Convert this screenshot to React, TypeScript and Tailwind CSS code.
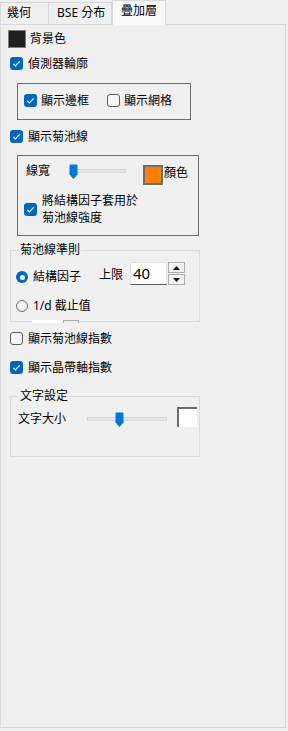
import React from "react";

function Check({ on }: { on: boolean }) {
  if (on) {
    return (
      <span className="w-[13px] h-[13px] shrink-0 rounded-[3px] bg-[#0067c0] flex items-center justify-center">
        <svg width="13" height="13" viewBox="0 0 13 13">
          <polyline points="3.3,6.8 5.4,8.9 9.7,4.4" fill="none" stroke="#ffffff" strokeWidth="1.1" />
        </svg>
      </span>
    );
  }
  return <span className="w-[13px] h-[13px] shrink-0 rounded-[3px] border border-[#5c5c5c] bg-[#f6f6f6]" />;
}

function Radio({ on }: { on: boolean }) {
  if (on) {
    return (
      <span className="w-[12px] h-[12px] shrink-0 rounded-full bg-[#0067c0] flex items-center justify-center">
        <span className="w-[5px] h-[5px] rounded-full bg-white" />
      </span>
    );
  }
  return <span className="w-[12px] h-[12px] shrink-0 rounded-full border border-[#6a6a6a] bg-[#f6f6f6]" />;
}

function Thumb() {
  return (
    <svg width="9" height="16" viewBox="0 0 9 16">
      <path d="M1.5 0.5 H7.5 Q8.5 0.5 8.5 1.5 V10.5 L4.5 15 L0.5 10.5 V1.5 Q0.5 0.5 1.5 0.5 Z" fill="#0078d7" />
    </svg>
  );
}

function Slider({ width, pos }: { width: number; pos: number }) {
  return (
    <div className="relative h-[16px]" style={{ width }}>
      <div className="absolute left-[1px] right-0 top-[5px] h-[4px] bg-[#e7e7e7] border border-[#d4d4d4]" />
      <div className="absolute top-0" style={{ left: pos }}>
        <Thumb />
      </div>
    </div>
  );
}

export default function App() {
  return (
    <div className="w-[288px] h-[731px] bg-[#f0f0f0] text-black text-[12px] leading-[16px] font-['Noto_Sans','Noto_Sans_CJK_TC',sans-serif] overflow-hidden">
      {/* tabs */}
      <div className="flex h-[24px] relative z-10">
        <div className="self-end h-[22px] w-[49px] border border-b-0 border-[#d9d9d9] pl-[6px] pt-[2px]">幾何</div>
        <div className="self-end h-[22px] w-[63px] border-t border-r border-[#d9d9d9] pl-[8px] pt-[2px]">BSE 分布</div>
        <div className="self-start h-[25px] w-[54px] border border-b-0 border-[#d9d9d9] bg-[#f9f9f9] pl-[8px] pt-[2px]">疊加層</div>
      </div>
      {/* panel */}
      <div className="w-[286px] h-[704px] border border-[#d9d9d9] bg-[#f0f0f0] flex flex-col items-start">
        <div className="mt-[5px] ml-[7px] flex items-center gap-[4px] h-[18px]">
          <span className="w-[18px] h-[18px] border border-[#7c7c7c] bg-[#1f1f1f]" />
          <span>背景色</span>
        </div>

        <div className="mt-[9px] ml-[9px] flex items-center gap-[5px] h-[13px]">
          <Check on={true} />
          <span>偵測器輪廓</span>
        </div>

        <div className="mt-[13px] ml-[16px] w-[174px] h-[37px] border border-[#6e6e6e] flex items-start pt-[10px] pl-[6px]">
          <div className="flex items-center gap-[4px] w-[83px] h-[13px]">
            <Check on={true} />
            <span>顯示邊框</span>
          </div>
          <div className="flex items-center gap-[4px] h-[13px]">
            <Check on={false} />
            <span>顯示網格</span>
          </div>
        </div>

        <div className="mt-[10px] ml-[9px] flex items-center gap-[5px] h-[13px]">
          <Check on={true} />
          <span>顯示菊池線</span>
        </div>

        <div className="mt-[12px] ml-[16px] w-[182px] h-[81px] border border-[#6e6e6e] flex flex-col">
          <div className="mt-[7px] flex items-start h-[22px]">
            <span className="ml-[8px]">線寬</span>
            <div className="ml-[19px] mt-[1px]">
              <Slider width={57} pos={0} />
            </div>
            <span className="ml-[17px] mt-[2px] w-[20px] h-[20px] border-2 border-[#6d6d6d] bg-[#ff7f00] shadow-[1px_1px_0_#ffffff]" />
            <span className="ml-[1px] mt-[2px]">顏色</span>
          </div>
          <div className="mt-[7px] ml-[6px] flex items-center gap-[5px]">
            <Check on={true} />
            <span className="leading-[17px]">
              將結構因子套用於
              <br />
              菊池線強度
            </span>
          </div>
        </div>

        <fieldset className="mt-[6px] ml-[9px] w-[190px] h-[80px] border border-[#dcdcdc]">
          <legend className="ml-[8px] px-[1px] leading-[16px]">菊池線準則</legend>
          <div className="mt-[4px] flex items-start h-[24px]">
            <span className="ml-[5px] mt-[9px]">
              <Radio on={true} />
            </span>
            <span className="ml-[5px] mt-[7px]">結構因子</span>
            <span className="ml-[18px] mt-[5px]">上限</span>
            <div className="ml-[7px] w-[37px] h-[23px] bg-white border border-[#e3e3e3] border-b-[#5a5a5a] pl-[2px] text-[15px] leading-[21px] font-['Noto_Sans',sans-serif]">
              40
            </div>
            <div className="ml-[1px] flex flex-col gap-[1px]">
              <div className="w-[17px] h-[11px] border border-[#adadad] bg-[#f3f3f3] flex items-center justify-center">
                <svg width="7" height="4" viewBox="0 0 7 4">
                  <path d="M0 4 L3.5 0 L7 4 Z" fill="#111" />
                </svg>
              </div>
              <div className="w-[17px] h-[11px] border border-[#adadad] bg-[#f3f3f3] flex items-center justify-center">
                <svg width="7" height="4" viewBox="0 0 7 4">
                  <path d="M0 0 L7 0 L3.5 4 Z" fill="#111" />
                </svg>
              </div>
            </div>
          </div>
          <div className="mt-[14px] ml-[5px] flex items-center gap-[5px] h-[12px]">
            <Radio on={false} />
            <span>1/d 截止值</span>
          </div>
          <div className="mt-[8px] ml-[21px] flex h-[3px]">
            <span className="w-[31px] h-[3px] bg-white" />
            <span className="w-[16px] h-[3px] border-t border-l border-r border-[#adadad] bg-[#ececec]" />
          </div>
        </fieldset>

        <div className="mt-[10px] ml-[9px] flex items-center gap-[5px] h-[13px]">
          <Check on={false} />
          <span>顯示菊池線指數</span>
        </div>

        <div className="mt-[16px] ml-[9px] flex items-center gap-[5px] h-[13px]">
          <Check on={true} />
          <span>顯示晶帶軸指數</span>
        </div>

        <fieldset className="mt-[14px] ml-[9px] w-[190px] h-[69px] border border-[#dcdcdc] overflow-hidden">
          <legend className="ml-[8px] px-[1px] leading-[16px]">文字設定</legend>
          <div className="mt-[3px] flex items-start">
            <span className="ml-[7px] mt-[4px]">文字大小</span>
            <div className="ml-[20px] mt-[5px]">
              <Slider width={81} pos={29} />
            </div>
            <span className="ml-[10px] w-[20px] h-[20px] border-t-2 border-l-2 border-[#6d6d6d] bg-white" />
          </div>
        </fieldset>
      </div>
    </div>
  );
}
